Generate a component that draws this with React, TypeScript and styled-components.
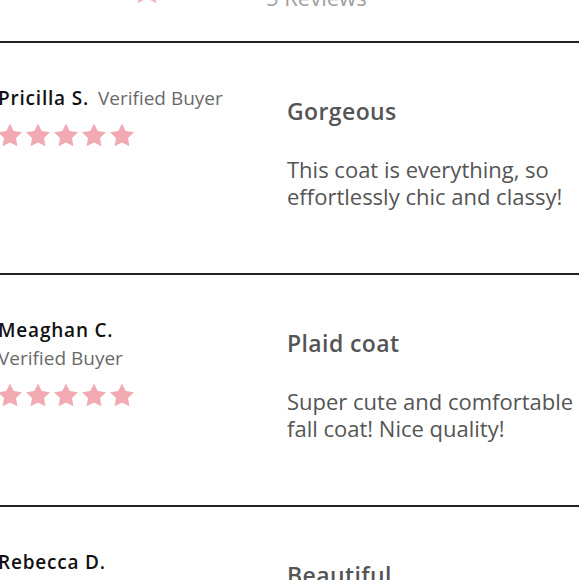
import React from 'react';
import { styled, createGlobalStyle } from 'styled-components';

const GlobalStyle = createGlobalStyle`
    html, body {
        margin: 0;
        padding: 0;
        background: #ffffff;
        overflow: hidden;
    }
    body {
        font-family: "Open Sans", "Liberation Sans", sans-serif;
    }
`;

type Review = {
    name: string;
    title: string;
    body: string;
    stacked: boolean;
};

const reviews: Review[] = [
    {
        name: 'Pricilla S.',
        title: 'Gorgeous',
        body: 'This coat is everything, so effortlessly chic and classy!',
        stacked: false,
    },
    {
        name: 'Meaghan C.',
        title: 'Plaid coat',
        body: 'Super cute and comfortable fall coat! Nice quality!',
        stacked: true,
    },
    {
        name: 'Rebecca D.',
        title: 'Beautiful',
        body: 'Love the colour and the fit, exactly as pictured.',
        stacked: true,
    },
];

const Star = ({ size = 24 }: { size?: number }) => (
    <svg width={size} height={size} viewBox="2 2 20 19.2">
        <polygon
            fill="currentColor"
            points="12,2 15.09,8.26 22,9.27 17,14.14 18.18,21.02 12,17.77 5.82,21.02 7,14.14 2,9.27 8.91,8.26"
        />
    </svg>
);

export default function App() {
    return (
        <>
            <GlobalStyle />
            <Page>
                <Summary>
                    <SummaryStar>
                        <Star size={30} />
                    </SummaryStar>
                    <Count>5 Reviews</Count>
                </Summary>
                {reviews.map((r) => (
                    <Row key={r.name}>
                        <Author>
                            <NameLine stacked={r.stacked}>
                                <Name>{r.name}</Name>
                                <Verified>Verified Buyer</Verified>
                            </NameLine>
                            <Stars>
                                {[0, 1, 2, 3, 4].map((i) => (
                                    <Star key={i} />
                                ))}
                            </Stars>
                        </Author>
                        <Content>
                            <Title>{r.title}</Title>
                            <Body>{r.body}</Body>
                        </Content>
                    </Row>
                ))}
            </Page>
        </>
    );
}

const Page = styled.div`
    width: 581px;
    margin: -26px 0 0 -2px;
`;

const Summary = styled.div`
    display: flex;
    align-items: flex-end;
    height: 67px;
    padding-left: 134px;
    gap: 104px;
`;

const SummaryStar = styled.span`
    display: flex;
    color: #f2b6bd;
    margin-bottom: 37px;
`;

const Count = styled.span`
    font-size: 22px;
    line-height: 30px;
    color: #a0a0a0;
    margin-bottom: 29px;
`;

const Row = styled.section`
    display: grid;
    grid-template-columns: 289px 300px;
    align-items: start;
    border-top: 2px solid #222;
    padding: 41px 0 63px;
`;

const Author = styled.div`
    display: flex;
    flex-direction: column;
    gap: 11px;
`;

const NameLine = styled.div<{ stacked: boolean }>`
    display: flex;
    flex-direction: ${(p) => (p.stacked ? 'column' : 'row')};
    align-items: ${(p) => (p.stacked ? 'flex-start' : 'baseline')};
    column-gap: 9px;
    line-height: 28px;
`;

const Name = styled.span`
    font-size: 19px;
    font-weight: 600;
    letter-spacing: 0.8px;
    color: #111;
`;

const Verified = styled.span`
    font-size: 19px;
    color: #6a6a6a;
`;

const Stars = styled.div`
    display: flex;
    gap: 4px;
    color: #f2aab2;
`;

const Content = styled.div`
    display: flex;
    flex-direction: column;
    padding-top: 13px;
    gap: 31px;
`;

const Title = styled.h3`
    margin: 0;
    font-size: 23px;
    line-height: 28px;
    font-weight: 600;
    color: #555;
    letter-spacing: 0.4px;
`;

const Body = styled.p`
    margin: 0;
    font-size: 22px;
    line-height: 27px;
    color: #555;
`;
